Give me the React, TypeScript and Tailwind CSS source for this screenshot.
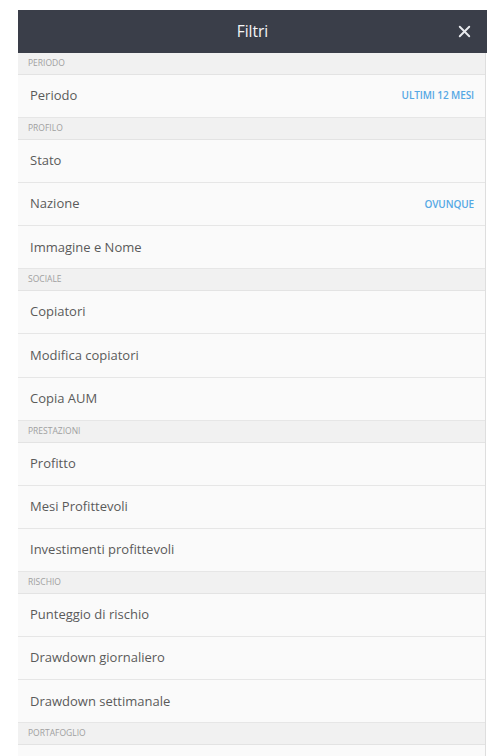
import { X } from "lucide-react";

type Row = { label: string; value?: string };
type Section = { title: string; rows: Row[] };

const sections: Section[] = [
  { title: "Periodo", rows: [{ label: "Periodo", value: "Ultimi 12 mesi" }] },
  {
    title: "Profilo",
    rows: [{ label: "Stato" }, { label: "Nazione", value: "Ovunque" }, { label: "Immagine e Nome" }],
  },
  {
    title: "Sociale",
    rows: [{ label: "Copiatori" }, { label: "Modifica copiatori" }, { label: "Copia AUM" }],
  },
  {
    title: "Prestazioni",
    rows: [{ label: "Profitto" }, { label: "Mesi Profittevoli" }, { label: "Investimenti profittevoli" }],
  },
  {
    title: "Rischio",
    rows: [{ label: "Punteggio di rischio" }, { label: "Drawdown giornaliero" }, { label: "Drawdown settimanale" }],
  },
  { title: "Portafoglio", rows: [{ label: "" }] },
];

export default function App() {
  return (
    <div className="h-[756px] overflow-hidden bg-white pt-[10px] pl-[18px] font-['Open_Sans','Noto_Sans',sans-serif]">
      <div className="w-[469px]">
        <div className="relative flex h-[43px] items-center justify-center bg-[#3a3e49]">
          <span className="text-[15.5px] font-medium text-[#f4f5f7]">Filtri</span>
          <button type="button" className="absolute right-[13px] top-[12px] text-[#e8eaee]">
            <X size={19} strokeWidth={2.4} />
          </button>
        </div>

        <div className="w-[468px] border-r border-[#dedede]">
          {sections.map(section => (
            <div key={section.title}>
              <div className="flex h-[21.8px] items-center border-b border-[#e3e3e3] bg-[#f1f1f1] pl-[10px] text-[8.5px] uppercase text-[#a0a0a0]">
                {section.title}
              </div>
              {section.rows.map((row, i) => (
                <div
                  key={i}
                  className="flex h-[43.2px] items-center justify-between border-b border-[#e6e6e6] bg-[#fafafa] pl-[12px] pr-[11px]"
                >
                  <span className="text-[13px] text-[#5a5a5a]">{row.label}</span>
                  {row.value && (
                    <span className="text-[10px] font-semibold uppercase tracking-[-0.1px] text-[#55a8e4]">
                      {row.value}
                    </span>
                  )}
                </div>
              ))}
            </div>
          ))}
        </div>
      </div>
    </div>
  );
}
